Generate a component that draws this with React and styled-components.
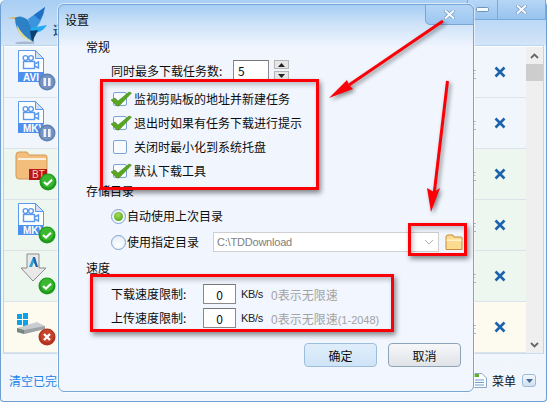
import React from 'react';
import styled, { createGlobalStyle } from 'styled-components';

const Global = createGlobalStyle`
  html, body { margin: 0; padding: 0; }
  body { width: 547px; height: 402px; overflow: hidden; font-family: "Noto Sans CJK SC", "Noto Sans", sans-serif; font-size: 12px; color: #0c0c0c; }
  * { box-sizing: border-box; }
`;

const Page = styled.div`
  position: relative;
  width: 547px;
  height: 402px;
  overflow: hidden;
  background: #f1f6fd;
`;

const MainWindow = styled.div`
  width: 547px;
  height: 402px;
  display: flex;
  flex-direction: column;
  padding: 0 3px 0 2px;
  border: 1px solid #6f9fd0;
  border-top: 0;
  border-radius: 6px 6px 4px 4px;
  background: linear-gradient(#a8cef4 0, #d3e5f8 45px, #edf4fd 46px, #f1f6fd 100%);
`;

const Head = styled.header`
  height: 45px;
  flex: none;
  display: flex;
  align-items: flex-start;
`;

const BirdLogo = styled.svg`
  width: 50px;
  height: 44px;
  flex: none;
`;

const AppName = styled.span`
  margin: 21px auto 0 0;
  white-space: nowrap;
  font-size: 12px;
  line-height: 18px;
  font-weight: 700;
  color: #1d4f86;
`;

const WinControls = styled.div`
  display: flex;
  margin-right: -3px;
`;

const WinButton = styled.div`
  width: ${p => p.$w}px;
  height: 20px;
  display: flex;
  align-items: center;
  justify-content: center;
  background: linear-gradient(#b6d6f6, #98c3ef);
  border: 1px solid #7ba9da;
  border-top: 0;
  border-left-width: ${p => (p.$first ? 1 : 0)}px;
  border-radius: ${p => (p.$first ? '0 0 0 4px' : '0')};
`;

const ListPanel = styled.div`
  height: 309px;
  flex: none;
  display: flex;
  margin-right: -1px;
  padding-top: 1px;
  border: 1px solid #bcd6f0;
  border-bottom: 1px solid #c9dcf0;
  background: #fff;
`;

const Rows = styled.div`
  flex: 1;
  display: flex;
  flex-direction: column;
`;

const Row = styled.div`
  height: 51px;
  flex: none;
  display: flex;
  align-items: center;
  justify-content: flex-end;
  background: ${p => p.$bg};
  border-bottom: 1px solid #dde3ea;
`;

const RowGraphic = styled.svg`
  width: 56px;
  height: 50px;
  flex: none;
  margin-right: auto;
`;

const RowAction = styled.span`
  font-size: 12px;
  color: #333;
  margin-right: 18px;
`;

const RemoveIcon = styled.svg`
  width: 12px;
  height: 12px;
  margin-right: 20px;
`;

const Scrollbar = styled.div`
  width: 17px;
  flex: none;
  display: flex;
  flex-direction: column;
  background: #efefef;
`;

const ScrollEnd = styled.div`
  height: 17px;
  flex: none;
  display: flex;
  align-items: center;
  justify-content: center;
`;

const ScrollThumb = styled.div`
  height: 17px;
  flex: none;
  background: #cdcdcd;
  margin-bottom: auto;
`;

const Footer = styled.footer`
  flex: 1;
  display: flex;
  align-items: center;
  padding: 6px 7px 0 6px;
  color: #1b84ea;
`;

const ClearLink = styled.span`
  flex: 1;
`;

const MenuLabel = styled.span`
  color: #111;
  margin: 0 6px 0 5px;
`;

const MenuDrop = styled.div`
  width: 14px;
  height: 13px;
  display: flex;
  align-items: center;
  justify-content: center;
  border: 1px solid #9dbbd9;
  border-radius: 3px;
  background: linear-gradient(#f4f8fc, #cfe0f1);
`;

const Dialog = styled.div`
  position: absolute;
  left: 58px;
  top: 4px;
  width: 416px;
  height: 388px;
  padding: 1px;
  display: flex;
  flex-direction: column;
  border: 1px solid #79a6d5;
  border-radius: 6px;
  background: linear-gradient(#a6cdf4 0, #cfe3f8 20px, #f0f5fe 42px, #f2f6ff 100%);
  box-shadow: 0 0 0 1px rgba(255,255,255,.55);
`;

const DialogClose = styled.div`
  position: absolute;
  right: -1px;
  top: -1px;
  width: 49px;
  height: 21px;
  display: flex;
  align-items: center;
  justify-content: center;
  background: linear-gradient(#b4d5f6, #9dc7f1);
  border: 1px solid #79a6d5;
  border-radius: 0 6px 0 5px;
`;

const DialogTitle = styled.div`
  height: 28px;
  flex: none;
  padding: 5px 0 0 5px;
  line-height: 18px;
  font-size: 12px;
`;

const Body = styled.div`
  flex: 1;
  display: flex;
  flex-direction: column;
  padding: 5px 11px 0 26px;
`;

const SectionTitle = styled.div`
  height: 16px;
  flex: none;
  line-height: 16px;
  margin-top: ${p => p.$mt || 0}px;
`;

const TaskRow = styled.div`
  height: 20px;
  margin: 5px 0 7px 25px;
  flex: none;
  display: flex;
  align-items: center;
`;

const TaskLabel = styled.span`
  width: 122px;
  flex: none;
`;

const NumInput = styled.div`
  width: ${p => p.$w}px;
  height: ${p => p.$h}px;
  flex: none;
  display: flex;
  align-items: center;
  justify-content: ${p => (p.$center ? 'center' : 'flex-start')};
  padding-left: ${p => (p.$center ? 0 : 4)}px;
  background: #fff;
  border: 1px solid #8a8a8a;
  border-top-color: #777;
`;

const Spinner = styled.div`
  display: flex;
  flex-direction: column;
  gap: 2px;
  margin-left: 5px;
`;

const SpinButton = styled.div`
  width: 15px;
  height: 9px;
  display: flex;
  align-items: center;
  justify-content: center;
  background: #e6e6e6;
  border: 1px solid #b5b5b5;
`;

const CheckRow = styled.label`
  height: 24px;
  margin-left: 25px;
  flex: none;
  display: flex;
  align-items: center;
  gap: 1px;
`;

const CheckGraphic = styled.svg`
  width: 22px;
  height: 20px;
  flex: none;
`;

const Lifted = styled.span`
  padding-bottom: 2px;
  flex: none;
  width: ${p => (p.$w ? `${p.$w}px` : 'auto')};
`;

const RadioRow = styled.label`
  height: ${p => p.$h}px;
  margin-top: ${p => p.$mt}px;
  margin-left: 25px;
  flex: none;
  display: flex;
  align-items: center;
`;

const Radio = styled.span`
  width: 15px;
  height: 15px;
  flex: none;
  margin-right: 1px;
  display: flex;
  align-items: center;
  justify-content: center;
  border-radius: 50%;
  border: 1px solid #7fa3cf;
  background: radial-gradient(circle at 50% 70%, #ffffff, #dfe9f6);
`;

const RadioDot = styled.span`
  width: 9px;
  height: 9px;
  border-radius: 50%;
  background: radial-gradient(circle at 45% 35%, #a6dd55, #3f9a10);
`;

const Combo = styled.div`
  width: 226px;
  height: 20px;
  flex: none;
  margin-left: 1px;
  display: flex;
  align-items: center;
  justify-content: space-between;
  padding: 0 4px 0 3px;
  color: #808080;
  background: #fff;
  border: 1px solid #cfcfcf;
  font-family: "Liberation Sans", sans-serif;
  font-size: 11px;
  letter-spacing: -0.2px;
`;

const FolderIcon = styled.svg`
  width: 18px;
  height: 17px;
  margin-left: 6px;
  flex: none;
`;

const SpeedRows = styled.div`
  display: flex;
  flex-direction: column;
  gap: 4px;
  margin: 8px 0 0 25px;
`;

const SpeedRow = styled.div`
  height: 20px;
  display: flex;
  align-items: center;
`;

const Unit = styled.span`
  width: 30px;
  margin-left: 5px;
  flex: none;
  color: #222;
  font-family: "Liberation Sans", sans-serif;
  font-size: 11px;
  letter-spacing: -0.3px;
`;

const Hint = styled.span`
  color: #a3a3a3;
  font-family: "Liberation Sans", "Noto Sans CJK SC", sans-serif;
`;

const HintRange = styled.span`
  font-size: 11px;
`;

const Actions = styled.div`
  display: flex;
  justify-content: flex-end;
  gap: 11px;
  margin-top: 15px;
`;

const DlgButton = styled.div`
  width: 73px;
  height: 24px;
  display: flex;
  align-items: center;
  justify-content: center;
  border-radius: 4px;
  border: 1px solid ${p => (p.$primary ? '#9cbedd' : '#8fa3b8')};
  background: ${p => (p.$primary ? 'linear-gradient(#e0eefb, #cfe4f7)' : 'linear-gradient(#f6f7f9, #dfe3e7)')};
`;

const RedBox = styled.div`
  position: absolute;
  left: ${p => p.$x}px;
  top: ${p => p.$y}px;
  width: ${p => p.$w}px;
  height: ${p => p.$h}px;
  border: 3px solid #fb0007;
  box-shadow: 2px 3px 5px rgba(0,0,0,.45), inset 2px 3px 5px rgba(0,0,0,.22);
  pointer-events: none;
`;

const ArrowLayer = styled.svg`
  position: absolute;
  left: 0;
  top: 0;
  width: 547px;
  height: 402px;
  pointer-events: none;
  filter: drop-shadow(2px 2px 2px rgba(0,0,0,.45));
`;

const XGlyph = ({ color = '#f6fafe', w = 11 }) => (
  <svg width={w} height={9} viewBox="0 0 11 9">
    <path d="M1.5 1 L9.5 8 M9.5 1 L1.5 8" stroke="#6f94ba" strokeWidth="3.4" strokeLinecap="square" />
    <path d="M1.8 1.2 L9.2 7.8 M9.2 1.2 L1.8 7.8" stroke={color} strokeWidth="2.2" strokeLinecap="square" />
  </svg>
);

const Badge = ({ cx, cy, kind }) => {
  if (kind === 'pause') return (
    <g>
      <circle cx={cx} cy={cy} r="8.5" fill="#5e7fb3" />
      <circle cx={cx} cy={cy} r="7" fill="#7592c1" />
      <rect x={cx - 3.5} y={cy - 4} width="2.6" height="8" fill="#eef2f8" />
      <rect x={cx + 1} y={cy - 4} width="2.6" height="8" fill="#eef2f8" />
    </g>
  );
  if (kind === 'ok') return (
    <g>
      <circle cx={cx} cy={cy} r="8.5" fill="#1f9a1f" />
      <circle cx={cx} cy={cy - 1} r="6.5" fill="#3bb82f" />
      <path d={`M${cx - 4} ${cy} l3 2.6 l5 -4.8`} fill="none" stroke="#fff" strokeWidth="2.2" />
    </g>
  );
  return (
    <g>
      <circle cx={cx} cy={cy} r="8.5" fill="#b1321f" />
      <circle cx={cx} cy={cy - 1} r="6.5" fill="#c8432b" />
      <path d={`M${cx - 3} ${cy - 3} l6 6 M${cx + 3} ${cy - 3} l-6 6`} stroke="#fff" strokeWidth="2.4" />
    </g>
  );
};

const FileGlyph = ({ label, y }) => (
  <g transform={`translate(18 ${y})`}>
    <path d="M.5 .5 H17.5 L25.5 8.5 V31.5 H.5 Z" fill="#fdfeff" stroke="#5b99ee" />
    <path d="M17.5 .5 V8.5 H25.5 Z" fill="#cfdff5" stroke="#5b99ee" />
    <rect x="0" y="22" width="26" height="10" fill="#4f90ee" />
    <text x="5" y="31" fontSize="10" fontWeight="700" fontFamily="Liberation Sans" fill="#fff">{label}</text>
    <g fill="none" stroke="#5b99ee" strokeWidth="1.4">
      <circle cx="7.5" cy="8" r="2.4" />
      <circle cx="13" cy="8" r="2.4" />
      <rect x="5.5" y="11.5" width="11" height="7" />
      <path d="M16.5 14 L20.5 12 V18 L16.5 16" />
    </g>
  </g>
);

const rowsData = [
  { bg: '#f1f6fd', art: <><FileGlyph label="AVI" y={3} /><Badge cx={47} cy={35} kind="pause" /></> },
  { bg: '#f1f6fd', art: <><FileGlyph label="MKV" y={3} /><Badge cx={47} cy={35} kind="pause" /></> },
  { bg: '#eef7ef', art: <>
      <path d="M16 6 Q16 3 19 3 H27 L29 6 H45 Q47 6 47 8 V27 Q47 30 44 30 H19 Q16 30 16 27 Z" fill="#f3bd7b" stroke="#d59a56" />
      <rect x="18" y="9" width="28" height="2" fill="#fdf0dd" />
      <rect x="29" y="20" width="18" height="11" fill="#b8161a" />
      <text x="32" y="29" fontSize="10" fontFamily="Liberation Sans" fill="#f6d7a8">BT</text>
      <Badge cx={48} cy={33} kind="ok" />
    </> },
  { bg: '#eef7ef', art: <><FileGlyph label="MKV" y={3} /><Badge cx={47} cy={35} kind="ok" /></> },
  { bg: '#eef7ef', art: <>
      <path d="M27 3 H39 V17 H46 L33 30 L21 17 H27 Z" fill="#e9e9e9" stroke="#8b8b8b" />
      <path d="M33 6 L29 16 H32 L34 11 L36 16 H38 Z" fill="#2f9fd6" />
      <path d="M33 6 L35 6 L38 16 H36 L34 11 Z" fill="#1d5fa8" />
      <Badge cx={47} cy={35} kind="ok" />
    </> },
  { bg: '#fdfbef', art: <>
      <g fill="#0aa3e8"><rect x="17" y="12" width="5" height="5" /><rect x="23" y="11" width="5" height="6" /><rect x="17" y="18" width="5" height="5" /><rect x="23" y="18" width="5" height="6" /></g>
      <path d="M17 26 L37 20 L45 24 V27 L24 32 L17 30 Z" fill="#c9cdd1" />
      <path d="M17 26 L24 28 V32 L17 30 Z" fill="#7c8186" />
      <path d="M24 28 L45 24 V27 L24 32 Z" fill="#9ea3a8" />
      <rect x="19" y="28" width="2" height="1" fill="#49c23a" />
      <Badge cx={47} cy={35} kind="err" />
    </> },
];

const Check = ({ on }) => (
  <CheckGraphic viewBox="0 0 22 20">
    <rect x="2.5" y="3.5" width="13" height="13" rx="1.5" fill="#f8fbfe" stroke="#7da3d0" />
    {on && <path d="M0 11 L4 9 L7 12 L18 3 L20.5 4 L8 17 L6 17 Z" fill="#5aa61e" stroke="#3b7f0d" strokeWidth=".5" />}
  </CheckGraphic>
);

const Tri = ({ up, color = '#222' }) => (
  <svg width="7" height="4" viewBox="0 0 7 4"><path d={up ? 'M3.5 0 L7 4 H0 Z' : 'M0 0 H7 L3.5 4 Z'} fill={color} /></svg>
);

export default function App() {
  return (
    <Page>
      <Global />
      <MainWindow>
        <Head>
          <BirdLogo viewBox="3 0 50 44">
            <path d="M7 18 L18 17 L18 19 Z" fill="#e2a52a" />
            <path d="M15 18 Q20 14 28 20 L33 30 L34 42 L22 36 Q15 28 15 18 Z" fill="#2b80c6" />
            <path d="M17 25 Q22 36 34 42 L24 38 Q17 33 17 25 Z" fill="#e6d88e" />
            <path d="M28 19 L45 7 Q42 24 32 32 Z" fill="#3b94de" />
            <path d="M34 15 L45 7 Q44 14 40 20 Z" fill="#1f6fc2" />
            <path d="M30 28 L47 25 Q42 33 33 33 Z" fill="#25aaf0" />
            <path d="M30 31 L38 30 L32 42 Z" fill="#0c3f70" />
            <ellipse cx="25" cy="43" rx="10" ry="1.5" fill="#7d8ea3" opacity=".5" />
          </BirdLogo>
          <AppName>迅</AppName>
          <WinControls>
            <WinButton $w={31} $first>
              <svg width="13" height="5" viewBox="0 0 13 5"><rect x=".5" y=".5" width="12" height="4" rx="1" fill="#f6fafe" stroke="#6f94ba" /></svg>
            </WinButton>
            <WinButton $w={48}><XGlyph /></WinButton>
          </WinControls>
        </Head>
        <ListPanel>
          <Rows>
            {rowsData.map((r, i) => (
              <Row key={i} $bg={r.bg}>
                <RowGraphic viewBox="4 0 56 50">{r.art}</RowGraphic>
                <RowAction>属性</RowAction>
                <RemoveIcon viewBox="0 0 12 12"><path d="M1.5 1.5 L10.5 10.5 M10.5 1.5 L1.5 10.5" stroke="#1c63ae" strokeWidth="2.6" /></RemoveIcon>
              </Row>
            ))}
          </Rows>
          <Scrollbar>
            <ScrollEnd>
              <svg width="9" height="6" viewBox="0 0 9 6"><path d="M1 5 L4.5 1.5 L8 5" fill="none" stroke="#666" strokeWidth="1.8" /></svg>
            </ScrollEnd>
            <ScrollThumb />
            <ScrollEnd>
              <svg width="9" height="6" viewBox="0 0 9 6"><path d="M1 1 L4.5 4.5 L8 1" fill="none" stroke="#666" strokeWidth="1.8" /></svg>
            </ScrollEnd>
          </Scrollbar>
        </ListPanel>
        <Footer>
          <ClearLink>清空已完成</ClearLink>
          <svg width="15" height="15" viewBox="0 0 15 15">
            <path d="M.5 .5 H10 L14.5 5 V14.5 H.5 Z" fill="#fbfdff" stroke="#8aa8c8" />
            <rect x="1" y="1" width="6" height="3" fill="#5fae2c" />
            <path d="M3 7 H12 M3 9.5 H12 M3 12 H12" stroke="#6f9ccf" />
          </svg>
          <MenuLabel>菜单</MenuLabel>
          <MenuDrop><Tri color="#44688f" /></MenuDrop>
        </Footer>
      </MainWindow>

      <Dialog>
        <DialogClose><XGlyph /></DialogClose>
        <DialogTitle>设置</DialogTitle>
        <Body>
          <SectionTitle>常规</SectionTitle>
          <TaskRow>
            <TaskLabel>同时最多下载任务数:</TaskLabel>
            <NumInput $w={36} $h={20}>5</NumInput>
            <Spinner>
              <SpinButton><Tri up /></SpinButton>
              <SpinButton><Tri /></SpinButton>
            </Spinner>
          </TaskRow>
          <CheckRow><Check on /><Lifted>监视剪贴板的地址并新建任务</Lifted></CheckRow>
          <CheckRow><Check on /><Lifted>退出时如果有任务下载进行提示</Lifted></CheckRow>
          <CheckRow><Check /><Lifted>关闭时最小化到系统托盘</Lifted></CheckRow>
          <CheckRow><Check on /><Lifted>默认下载工具</Lifted></CheckRow>
          <SectionTitle>存储目录</SectionTitle>
          <RadioRow $h={24} $mt={5}><Radio><RadioDot /></Radio><Lifted>自动使用上次目录</Lifted></RadioRow>
          <RadioRow $h={20} $mt={4}>
            <Radio />
            <Lifted $w={85}>使用指定目录</Lifted>
            <Combo>
              C:\TDDownload
              <svg width="10" height="6" viewBox="0 0 10 6"><path d="M1 1 L5 5 L9 1" fill="none" stroke="#b0b0b0" /></svg>
            </Combo>
            <FolderIcon viewBox="0 0 18 17">
              <path d="M1 3 Q1 1 3 1 H8 L9 3 H16 Q17 3 17 4 V15.5 H1 Z" fill="#fbdc8f" stroke="#c98a3c" />
              <rect x="1.5" y="5.5" width="15" height="1.5" fill="#fff3cf" />
            </FolderIcon>
          </RadioRow>
          <SectionTitle $mt={8}>速度</SectionTitle>
          <SpeedRows>
            <SpeedRow>
              <Lifted $w={92}>下载速度限制:</Lifted>
              <NumInput $w={33} $h={20} $center>0</NumInput>
              <Unit>KB/s</Unit>
              <Hint>0表示无限速</Hint>
            </SpeedRow>
            <SpeedRow>
              <Lifted $w={92}>上传速度限制:</Lifted>
              <NumInput $w={33} $h={20} $center>0</NumInput>
              <Unit>KB/s</Unit>
              <Hint>0表示无限速<HintRange>(1-2048)</HintRange></Hint>
            </SpeedRow>
          </SpeedRows>
          <Actions>
            <DlgButton $primary>确定</DlgButton>
            <DlgButton>取消</DlgButton>
          </Actions>
        </Body>
      </Dialog>

      <RedBox $x={100} $y={79} $w={219} $h={111} />
      <RedBox $x={408} $y={223} $w={59} $h={33} />
      <RedBox $x={90} $y={274} $w={304} $h={58} />

      <ArrowLayer viewBox="0 0 547 402">
        <path d="M443 21 L349 85" stroke="#fb0007" strokeWidth="3" />
        <path d="M329 98 L347 80 L349 85 L353 89 Z" fill="#fb0007" />
        <path d="M447.5 81 L434 195" stroke="#fb0007" strokeWidth="3" />
        <path d="M431 212 L427 188 L434 192 L440 188 Z" fill="#fb0007" />
      </ArrowLayer>
    </Page>
  );
}
